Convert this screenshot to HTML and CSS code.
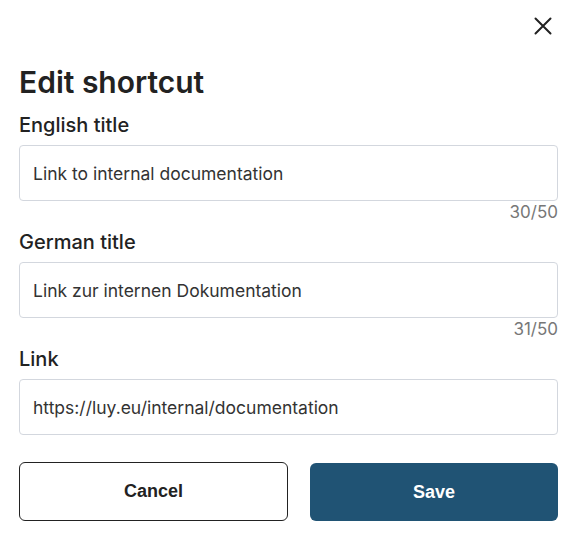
FILE: index.html
```html
<!DOCTYPE html>
<html lang="en">
<head>
    <meta charset="UTF-8">
    <title>Edit shortcut</title>
    <link rel="stylesheet" href="styles.css">
</head>
<body>
    <div class="dialog">
        <div class="dialog-top">
            <button class="close-btn" aria-label="Close">
                <svg width="18" height="18" viewBox="0 0 18 18"><path d="M1.5 1.5L16.5 16.5M16.5 1.5L1.5 16.5" stroke="#222" stroke-width="2" stroke-linecap="round"/></svg>
            </button>
        </div>
        <h1>Edit shortcut</h1>
        <div class="field">
            <label>English title</label>
            <input type="text" value="Link to internal documentation">
            <div class="counter">30/50</div>
        </div>
        <div class="field">
            <label>German title</label>
            <input type="text" value="Link zur internen Dokumentation">
            <div class="counter">31/50</div>
        </div>
        <div class="field">
            <label>Link</label>
            <input type="text" value="https://luy.eu/internal/documentation">
        </div>
        <div class="actions">
            <button class="btn btn-cancel">Cancel</button>
            <button class="btn btn-save">Save</button>
        </div>
    </div>
</body>
</html>
```

FILE: styles.css
```css
body {
    margin: 0;
    background: #fff;
    font-family: Inter, "Noto Sans", sans-serif;
    color: #222;
}
.dialog {
    padding: 0 19px;
}
.dialog-top {
    display: flex;
    justify-content: flex-end;
    padding-top: 11px;
}
.close-btn {
    background: none;
    border: none;
    padding: 0;
    width: 30px;
    height: 30px;
    display: flex;
    align-items: center;
    justify-content: center;
    cursor: pointer;
}
h1 {
    margin: 23px 0 0;
    font-size: 30px;
    font-weight: 600;
    line-height: 36px;
}
.field {
    display: flex;
    flex-direction: column;
}
.field label {
    font-size: 20px;
    font-weight: 500;
    line-height: 24px;
    margin-top: 9px;
    margin-bottom: 8px;
}
h1 + .field label {
    margin-top: 13px;
}
.field input {
    height: 56px;
    box-sizing: border-box;
    border: 1px solid #d3d7de;
    border-radius: 4px;
    padding: 0 13px;
    font-family: Inter, "Noto Sans", sans-serif;
    font-size: 17.5px;
    color: #333;
    outline: none;
}
.counter {
    text-align: right;
    font-size: 17px;
    color: #777;
    line-height: 18px;
    margin-top: 2px;
}
.actions {
    display: flex;
    gap: 22px;
    margin-top: 27px;
}
.btn {
    flex: 1;
    height: 59px;
    border-radius: 6px;
    font-family: "Liberation Sans", Arial, sans-serif;
    font-size: 18px;
    font-weight: bold;
    cursor: pointer;
}
.btn-cancel {
    background: #fff;
    border: 1px solid #222;
    color: #222;
    flex: 0 0 269px;
}
.btn-save {
    background: #205374;
    border: none;
    color: #fff;
    height: 58px;
    margin-top: 1px;
}
```
